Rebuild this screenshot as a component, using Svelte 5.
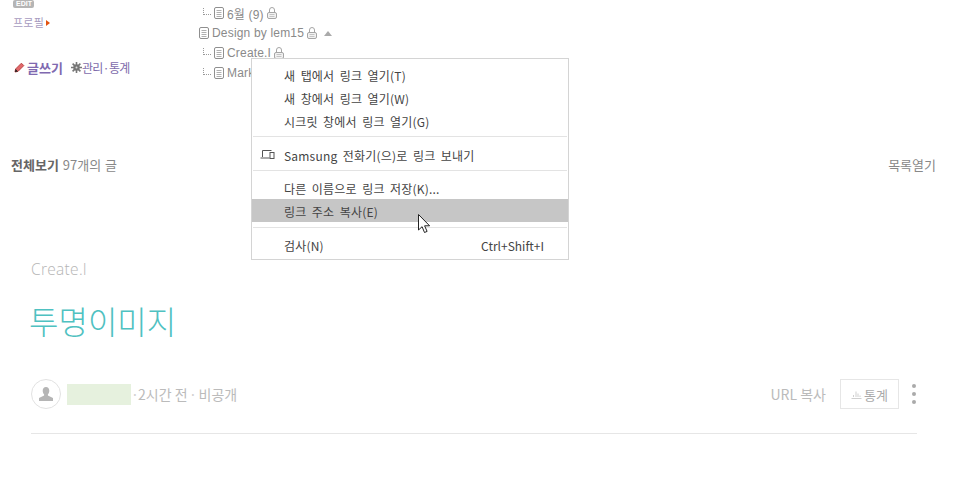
<script>
  const tree = [
    { label: '6월 (9)', sub: true, lock: true },
    { label: 'Design by lem15', sub: false, lock: true, arrow: true },
    { label: 'Create.I', sub: true, lock: true },
    { label: 'Markdown', sub: true, lock: false }
  ];
  const groups = [
    [{ t: '새 탭에서 링크 열기(T)' }, { t: '새 창에서 링크 열기(W)' }, { t: '시크릿 창에서 링크 열기(G)' }],
    [{ t: 'Samsung 전화기(으)로 링크 보내기', device: true }],
    [{ t: '다른 이름으로 링크 저장(K)...' }, { t: '링크 주소 복사(E)', active: true }],
    [{ t: '검사(N)', key: 'Ctrl+Shift+I' }]
  ];
</script>

{#snippet doc()}
  <svg class="doc" width="10" height="12" viewBox="0 0 10 12"><rect x="0.5" y="0.5" width="9" height="11" rx="1.5" fill="#fff" stroke="#8f8f8f"/><path d="M2.500 3.500h5M2.500 5.500h5M2.500 7.500h5M2.500 9.500h5" stroke="#b0b0b0"/></svg>
{/snippet}
{#snippet lock()}
  <svg class="lock" width="10" height="12" viewBox="0 0 10 12"><path d="M2.500 5.500V3a2.500 2.500 0 0 1 5 0v2.500" fill="none" stroke="#a5a5a5"/><rect x="0.5" y="5.500" width="9" height="6" rx="1.500" fill="#f2f2f2" stroke="#a5a5a5"/><path d="M2.500 7.500h5M2.500 9.500h5" stroke="#c4c4c4"/></svg>
{/snippet}

<div class="page">
  <header class="top">
    <div class="side">
      <span class="badge">EDIT</span>
      <a class="profile">프로필<i class="tri"></i></a>
      <div class="actions">
        <svg width="11" height="11" viewBox="0 0 11 11"><path d="M1 10l.6-3L7.400 1.200l2.400 2.400L4 9.400z" fill="#e2686a" stroke="#b44"/><path d="M1 10l.6-3 2.400 2.400z" fill="#222"/></svg>
        <b>글쓰기</b>
        <svg class="gear" width="11" height="11" viewBox="0 0 11 11"><circle cx="5.500" cy="5.500" r="3.200" fill="#777"/><path d="M5.500 0v11M0 5.500h11M1.600 1.600l7.800 7.800M9.400 1.600l-7.800 7.800" stroke="#777" stroke-width="1.600"/><circle cx="5.500" cy="5.500" r="1" fill="#ddd"/></svg>
        <span class="manage">관리·통계</span>
      </div>
    </div>
    <ul class="tree">
      {#each tree as row}
        <li class:sub={row.sub}>
          {#if row.sub}<i class="branch"></i>{/if}
          {@render doc()}
          <span>{row.label}</span>
          {#if row.lock}{@render lock()}{/if}
          {#if row.arrow}<i class="up"></i>{/if}
        </li>
      {/each}
    </ul>
  </header>

  <div class="listbar">
    <div><b>전체보기</b> 97개의 글</div>
    <div>목록열기</div>
  </div>

  <article class="post">
    <div class="cat">Create.I</div>
    <h1>투명이미지</h1>
    <div class="meta">
      <span class="avatar">
        <svg width="16" height="16" viewBox="0 0 16 16"><path d="M8 1c2 0 3.300 1.500 3.300 3.700 0 1.500-.6 2.800-1.400 3.600v1.200L15 12v3H1v-3l5.100-2.500V8.300C5.300 7.500 4.700 6.200 4.700 4.700 4.700 2.500 6 1 8 1z" fill="#b5b5b5"/></svg>
      </span>
      <span class="name"></span>
      <i class="sep first">·</i>
      <span>2시간 전</span>
      <i class="sep">·</i>
      <span>비공개</span>
      <span class="spacer"></span>
      <span class="url">URL 복사</span>
      <span class="stat">
        <svg width="11" height="9" viewBox="0 0 11 9"><path d="M.5 8.500h10M2.500 7V5M5 7V1.500M7 7V3.500M9 7V5.500" stroke="#cfcfcf" fill="none"/></svg>
        통계
      </span>
      <span class="more"><i></i><i></i><i></i></span>
    </div>
  </article>

  <nav class="menu">
    {#each groups as g, i}
      {#if i > 0}<hr />{/if}
      {#each g as item}
        <div class="item" class:active={item.active} class:send={item.device}>
          {#if item.device}
            <svg class="device" width="15" height="11" viewBox="0 0 15 11"><path d="M2.500 8V1.500h9M.5 9h9" stroke="#555" fill="none"/><rect x="10" y="3.500" width="4" height="6" fill="#fff" stroke="#555"/></svg>
          {/if}
          <span>{item.t}</span>
          {#if item.key}<span class="key">{item.key}</span>{/if}
        </div>
      {/each}
    {/each}
    <svg class="cursor" width="13" height="20" viewBox="0 0 13 20"><path d="M.5.5v15.500l3.600-3.300 2.400 5.800 2.600-1.100-2.500-5.600h5z" fill="#fff" stroke="#222"/></svg>
  </nav>
</div>

<style>
  :global(body) { margin: 0; background: #fff; }
  .page {
    position: relative;
    width: 975px;
    height: 483px;
    overflow: hidden;
    font-family: "Noto Sans CJK KR", "Liberation Sans", sans-serif;
    color: #777;
  }
  .top { display: flex; height: 155px; padding-left: 13px; box-sizing: border-box; }
  .side { width: 186px; display: flex; flex-direction: column; align-items: flex-start; }
  .badge {
    background: #b5b5b5; color: #fff; font: bold 7px/8px "Liberation Sans", sans-serif;
    padding: 0 3px; border-radius: 2px; height: 8px; width: 15px; text-align: center;
  }
  .profile { margin-top: 7px; font-size: 11px; line-height: 15px; color: #a79bc0; display: flex; align-items: center; gap: 2px; letter-spacing: 0.2px; }
  .tri { width: 0; height: 0; border: 3px solid transparent; border-left: 4px solid #e2520f; border-right: 0; }
  .actions { margin-top: 29px; margin-left: 1px; display: flex; align-items: center; height: 16px; font-size: 12px; color: #7e6bab; }
  .actions b { margin-left: 2px; font-size: 13px; font-weight: 700; color: #8069b0; }
  .gear { margin-left: 8px; }
  .manage { margin-left: 0; letter-spacing: -0.6px; }
  .tree {
    list-style: none; margin: 0; padding: 3px 0 0;
    font-size: 12px; color: #8a8a8a;
    font-family: "Liberation Sans", "Noto Sans CJK KR", sans-serif;
    letter-spacing: 0.18px;
  }
  .tree li { height: 20px; display: flex; align-items: center; }
  .tree li.sub { padding-left: 4px; }
  .doc { margin-right: 3px; flex: none; }
  .lock { margin-left: 3px; flex: none; }
  .branch { width: 7px; height: 6px; margin: -4px 3px 0 0; border-left: 1px dotted #999; border-bottom: 1px dotted #999; }
  .up { margin-left: 7px; width: 0; height: 0; border: 4px solid transparent; border-bottom: 5px solid #aaa; border-top: 0; }
  .listbar {
    display: flex; justify-content: space-between;
    padding: 0 39px 0 11px; font-size: 13px; line-height: 20px; color: #888;
    word-spacing: 1px;
  }
  .listbar b { color: #666; }
  .post { padding: 0 58px 0 31px; margin-top: 84px; }
  .cat { font: 300 15.5px/20px "Open Sans", "Liberation Sans", sans-serif; letter-spacing: 0.3px; color: #b5b5b5; }
  h1 { margin: 18px 0 0 -2px; font-size: 32px; line-height: 46px; font-weight: 300; color: #4fc1c1; }
  .meta {
    margin-top: 36px; height: 30px; padding-bottom: 24px;
    display: flex; align-items: center; border-bottom: 1px solid #e6e6e6;
    font-size: 14px; color: #bbb;
  }
  .avatar { width: 28px; height: 28px; border: 1px solid #e2e2e2; border-radius: 50%; display: grid; place-items: center; }
  .name { width: 64px; height: 21px; background: #e6f1de; margin-left: 6px; }
  .sep { width: 11px; text-align: center; font-style: normal; color: #d0d0d0; }
  .sep.first { width: 7px; }
  .spacer { flex: 1; }
  .url { margin-right: 14px; }
  .stat {
    width: 57px; height: 28px; border: 1px solid #e6e6e6; display: flex; align-items: center; justify-content: center; gap: 2px;
    color: #aaa; font-size: 13px;
  }
  .more { display: flex; flex-direction: column; gap: 4px; margin: 0 0 0 13px; width: 4px; padding-right: 1px; }
  .more i { width: 4px; height: 4px; border-radius: 50%; background: #aaa; }
  .menu {
    position: absolute; left: 251px; top: 58px; width: 316px; height: 196px;
    padding: 4px 0 0; background: #fff; border: 1px solid #d4d4d4;
    font-size: 12px; letter-spacing: 0.2px; word-spacing: 2.5px; color: #444;
  }
  .item { position: relative; height: 23px; line-height: 25px; padding: 0 24px 0 32px; display: flex; justify-content: space-between; }
  .item.active { background: #c6c6c6; margin-bottom: 5px; }
  .item.send { height: 24px; line-height: 27px; }
  .key { letter-spacing: 0; }
  .device { position: absolute; left: 8px; top: 7px; }
  hr { border: 0; border-top: 1px solid #e3e3e3; margin: 4px 1px 5px; }
  .cursor { position: absolute; left: 166px; top: 155px; }
</style>
